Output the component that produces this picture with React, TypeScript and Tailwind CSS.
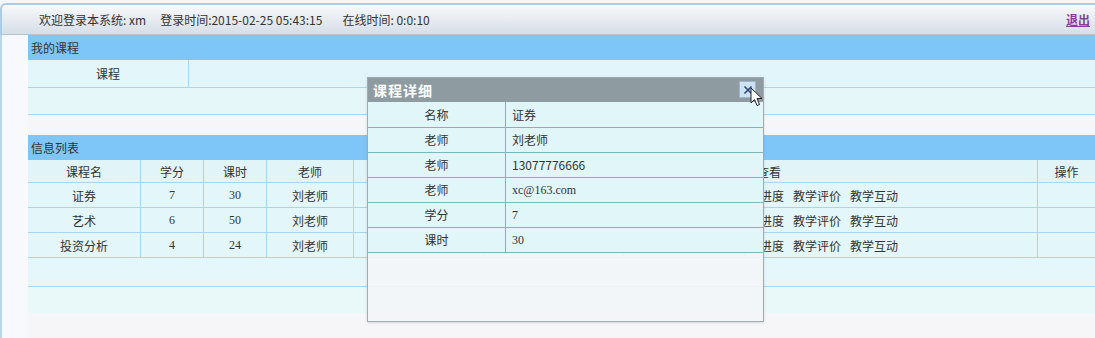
import React from 'react';

const cjk = "font-['Noto_Sans_CJK_SC','Noto_Sans',sans-serif]";
const serif = "font-['Liberation_Serif','Noto_Sans_CJK_SC',serif]";

const courses = [
  { name: '证券', credit: '7', hours: '30', teacher: '刘老师' },
  { name: '艺术', credit: '6', hours: '50', teacher: '刘老师' },
  { name: '投资分析', credit: '4', hours: '24', teacher: '刘老师' },
];

const details: { label: string; value: string; serif?: boolean }[] = [
  { label: '名称', value: '证券' },
  { label: '老师', value: '刘老师' },
  { label: '老师', value: '13077776666' },
  { label: '老师', value: 'xc@163.com', serif: true },
  { label: '学分', value: '7', serif: true },
  { label: '课时', value: '30', serif: true },
];

const CursorIcon = () => (
  <svg width="14" height="21" viewBox="0 0 14 21" className="absolute left-[10px] top-[5px]">
    <path d="M1 1 L1 16 L4.5 12.5 L7 18.5 L9.5 17.5 L7 11.5 L12 11.5 Z" fill="#fff" stroke="#222" strokeWidth="1" strokeLinejoin="round" />
  </svg>
);

const App: React.FC = () => {
  return (
    <div className={`relative w-[1095px] h-[338px] overflow-hidden bg-[#f6f6f9] text-[12px] text-[#333] ${cjk}`}>
      {/* Top bar */}
      <div className="mt-[3px] h-[32px] rounded-tl-[6px] border-t-2 border-l-2 border-b border-[#a9cde6] border-b-[#b5c3cf] bg-gradient-to-b from-[#f8f9fc] to-[#d6dee6] flex items-center">
        <span className="ml-[37px]">欢迎登录本系统: xm</span>
        <span className="ml-[14px]">登录时间:2015-02-25 05:43:15</span>
        <span className="ml-[20px]">在线时间: 0:0:10</span>
        <a className="ml-auto mr-[5px] font-bold text-[#8a3b9c] underline">退出</a>
      </div>

      <div className="flex h-full">
        <div className="w-[28px] shrink-0 border-l-2 border-[#b9d6ec] bg-[#f8f9fc]" />
        <div className="flex-1">
          {/* 我的课程 */}
          <div className="h-[25px] bg-[#7fc6f8] pl-[3px] flex items-center">我的课程</div>
          <div className="flex h-[28px] border-b border-[#a8d5ef] bg-[#e3f6f9]">
            <div className="w-[161px] border-r border-[#a8d5ef] flex items-center justify-center">课程</div>
            <div className="flex-1 bg-[#e1f5fa]" />
          </div>
          <div className="h-[27px] border-b border-[#a8d5ef] bg-[#e6f7fa]" />

          {/* 信息列表 */}
          <div className="mt-[20px] h-[25px] bg-[#7fc6f8] pl-[3px] flex items-center">信息列表</div>
          <div className="flex h-[23px] border-b border-[#a8d5ef] bg-[#e1f5f9] text-center">
            <div className="w-[113px] border-r border-[#a8d5ef] leading-[23px]">课程名</div>
            <div className="w-[63px] border-r border-[#a8d5ef] leading-[23px]">学分</div>
            <div className="w-[63px] border-r border-[#a8d5ef] leading-[23px]">课时</div>
            <div className="w-[87px] border-r border-[#a8d5ef] leading-[23px]">老师</div>
            <div className="w-[130px] border-r border-[#a8d5ef]" />
            <div className="w-[140px] border-r border-[#a8d5ef]" />
            <div className="w-[121px] border-r border-[#a8d5ef]" />
            <div className="w-[293px] border-r border-[#a8d5ef] leading-[23px] text-left pl-[12px]">查看</div>
            <div className="flex-1 leading-[23px]">操作</div>
          </div>
          {courses.map((c) => (
            <div key={c.name} className="flex h-[25px] border-b border-[#a8d5ef] bg-[#e3f6f9] text-center">
              <div className="w-[113px] border-r border-[#a8d5ef] leading-[25px]">{c.name}</div>
              <div className={`w-[63px] border-r border-[#a8d5ef] leading-[25px] ${serif}`}>{c.credit}</div>
              <div className={`w-[63px] border-r border-[#a8d5ef] leading-[25px] ${serif}`}>{c.hours}</div>
              <div className="w-[87px] border-r border-[#a8d5ef] leading-[25px]">{c.teacher}</div>
              <div className="w-[130px] border-r border-[#a8d5ef]" />
              <div className="w-[140px] border-r border-[#a8d5ef]" />
              <div className="w-[121px] border-r border-[#a8d5ef]" />
              <div className="w-[293px] border-r border-[#a8d5ef] leading-[25px] text-left pl-[15px] whitespace-nowrap">
                进度<span className="ml-[9px]">教学评价</span><span className="ml-[9px]">教学互动</span>
              </div>
              <div className="flex-1" />
            </div>
          ))}
          <div className="h-[29px] border-b border-[#a8d5ef] bg-[#e5f7fa]" />
          <div className="h-[26px] bg-[#e9f8f9]" />
        </div>
      </div>

      {/* Dialog */}
      <div className="absolute left-[367px] top-[77px] w-[397px] h-[245px] border border-[#a3abb0] bg-[#f4f5f7]/90 shadow-sm">
        <div className="relative h-[24px] bg-[#8e9ba1] flex items-center pl-[5px]">
          <span className="text-[14px] font-bold text-white tracking-[1px]">课程详细</span>
          <div className="absolute right-[7px] top-[3px] w-[17px] h-[17px] bg-[#cfe2f4] border border-[#9fb5c9] flex items-center justify-center">
            <svg width="10" height="10" viewBox="0 0 10 10">
              <path d="M1.5 1.5 L8.5 8.5 M8.5 1.5 L1.5 8.5" stroke="#2a4a7a" strokeWidth="1.6" />
            </svg>
            <CursorIcon />
          </div>
        </div>
        <div className="border-b border-[#7cb7bc]">
          {details.map((d, i) => (
            <div key={i} className={`flex h-[25px] bg-[#e0f6f9] ${i > 0 ? 'border-t border-[#7cb7bc]' : ''}`}>
              <div className="w-[138px] border-r border-[#7cb7bc] flex items-center justify-center">{d.label}</div>
              <div className={`flex-1 flex items-center pl-[6px] ${d.serif ? serif : ''}`}>{d.value}</div>
            </div>
          ))}
        </div>
      </div>
    </div>
  );
};

export default App;
